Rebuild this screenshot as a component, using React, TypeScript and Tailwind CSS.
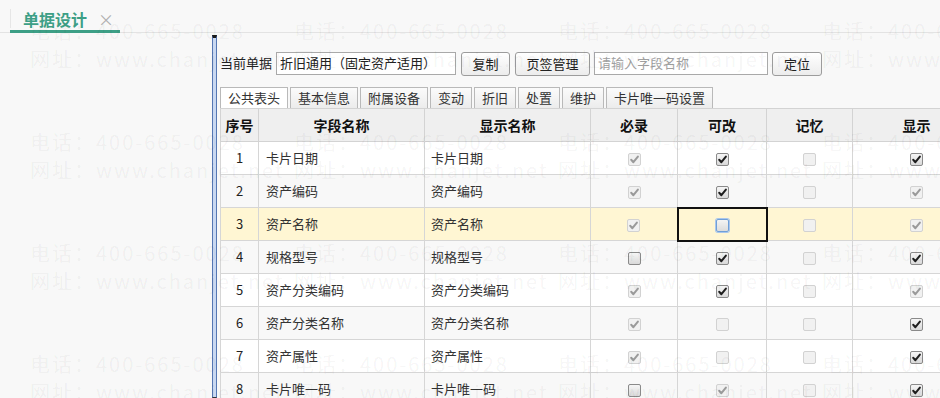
import React from 'react'

type Box = 'c' | 'u' | 'dc' | 'du' | 'uf'

const rows: { n: number; f: string; d: string; b: Box[] }[] = [
  { n: 1, f: '卡片日期', d: '卡片日期', b: ['dc', 'c', 'du', 'c'] },
  { n: 2, f: '资产编码', d: '资产编码', b: ['dc', 'c', 'du', 'dc'] },
  { n: 3, f: '资产名称', d: '资产名称', b: ['dc', 'uf', 'du', 'dc'] },
  { n: 4, f: '规格型号', d: '规格型号', b: ['u', 'c', 'du', 'c'] },
  { n: 5, f: '资产分类编码', d: '资产分类编码', b: ['dc', 'c', 'du', 'dc'] },
  { n: 6, f: '资产分类名称', d: '资产分类名称', b: ['dc', 'du', 'du', 'c'] },
  { n: 7, f: '资产属性', d: '资产属性', b: ['dc', 'du', 'du', 'c'] },
  { n: 8, f: '卡片唯一码', d: '卡片唯一码', b: ['u', 'dc', 'du', 'c'] },
]

const tabs = ['公共表头', '基本信息', '附属设备', '变动', '折旧', '处置', '维护', '卡片唯一码设置']

function Check({ kind }: { kind: Box }) {
  const disabled = kind === 'dc' || kind === 'du'
  const checked = kind === 'c' || kind === 'dc'
  let cls = 'border-[#8a8a8a] bg-gradient-to-b from-[#f6f6f6] to-[#d9d9d9]'
  if (disabled) cls = 'border-[#d2d2d2] bg-[#f1f1f1]'
  if (kind === 'uf') cls = 'border-[#6f9fd8] bg-gradient-to-b from-[#f4f4f4] to-[#dcdcdc] ring-1 ring-[#a9c6ec]'
  return (
    <span className={`inline-flex h-[13px] w-[13px] items-center justify-center rounded-[2px] border align-middle ${cls}`}>
      {checked && (
        <svg width="11" height="11" viewBox="0 0 11 11">
          <path
            d="M2.2 5.8 L4.4 8.2 L8.9 2.6"
            fill="none"
            stroke={disabled ? '#9a9a9a' : '#1e1e1e'}
            strokeWidth="2"
            strokeLinecap="round"
            strokeLinejoin="round"
          />
        </svg>
      )}
    </span>
  )
}

function Button({ children, w }: { children: React.ReactNode; w: string }) {
  return (
    <button
      className={`${w} h-[24px] rounded-[3px] border border-[#9c9c9c] bg-gradient-to-b from-white to-[#ececec] text-[13px] text-[#222]`}
    >
      {children}
    </button>
  )
}

export default function App() {
  return (
    <div className="relative h-[398px] w-[940px] overflow-hidden bg-[#f8f8f8] font-['Noto_Sans_CJK_SC',sans-serif] text-[#333]">
      <div className="flex h-[33px] items-end border-b border-[#e3e3e3] pl-[10px]">
        <div className="mb-[-1px] flex h-[24px] w-[110px] items-start border-b-[3px] border-[#3d9f86]">
          <div className="flex h-[19px] items-center border-l border-[#e6e6e6] pl-[12px]">
            <span className="text-[16px] font-bold leading-none text-[#3d9f86]">单据设计</span>
            <span className="ml-[11px] text-[16px] leading-none text-[#b0b0b0]">×</span>
          </div>
        </div>
      </div>

      <div className="flex h-[365px] pt-[2px]">
        <div className="w-[212px] shrink-0" />
        <div className="w-[5px] shrink-0 border-x border-b border-t-[3px] border-x-[#5577b3] border-t-[#1a1a1a] bg-[#c9d8f1]" />
        <div className="min-w-0 flex-1 overflow-hidden pl-[3px] pt-[16px]">
          <div className="flex h-[24px] items-center">
            <span className="text-[13px] text-[#222]">当前单据</span>
            <div className="ml-[4px] flex h-[23px] w-[180px] items-center border border-[#a9a9a9] bg-white px-[3px] text-[13px] text-[#222]">
              折旧通用（固定资产适用）
            </div>
            <div className="ml-[5px]">
              <Button w="w-[49px]">复制</Button>
            </div>
            <div className="ml-[5px]">
              <Button w="w-[75px]">页签管理</Button>
            </div>
            <div className="ml-[4px] flex h-[23px] w-[174px] items-center border border-[#a9a9a9] bg-white px-[3px] text-[13px] text-[#a0a0a0]">
              请输入字段名称
            </div>
            <div className="ml-[4px]">
              <Button w="w-[50px]">定位</Button>
            </div>
          </div>

          <div className="mt-[12px] flex h-[21px] gap-[2px]">
            {tabs.map((t, i) => (
              <div
                key={t}
                className={`flex items-center border border-b-0 border-[#b9b9b9] px-[7px] text-[13px] text-[#333] ${
                  i === 0 ? 'bg-white' : 'bg-gradient-to-b from-[#fbfbfb] to-[#ececec]'
                }`}
              >
                {t}
              </div>
            ))}
          </div>

          <table className="w-[760px] table-fixed border-collapse border-l border-[#cfcfcf] bg-white text-[13px]">
            <colgroup>
              <col className="w-[38px]" />
              <col className="w-[166px]" />
              <col className="w-[166px]" />
              <col className="w-[87px]" />
              <col className="w-[89px]" />
              <col className="w-[86px]" />
              <col className="w-[128px]" />
            </colgroup>
            <thead>
              <tr className="h-[33px] bg-[#efefef] text-[14px] font-bold text-[#111]">
                {['序号', '字段名称', '显示名称', '必录', '可改', '记忆', '显示'].map((h) => (
                  <th key={h} className="border border-[#d3d3d3] text-center font-bold">
                    {h}
                  </th>
                ))}
              </tr>
            </thead>
            <tbody>
              {rows.map((r) => (
                <tr
                  key={r.n}
                  className={`h-[33px] ${r.n === 3 ? 'bg-[#fff6d3]' : r.n % 2 === 0 ? 'bg-[#f8f8f8]' : 'bg-white'}`}
                >
                  <td className="border border-[#d6d6d6] text-center text-[#222]">{r.n}</td>
                  <td className="border border-[#d6d6d6] pl-[7px] text-[#333]">{r.f}</td>
                  <td className="border border-[#d6d6d6] pl-[6px] text-[#333]">{r.d}</td>
                  {r.b.map((b, i) => (
                    <td
                      key={i}
                      className={`text-center ${
                        b === 'uf' ? 'border-2 border-[#111]' : 'border border-[#d6d6d6]'
                      }`}
                    >
                      <Check kind={b} />
                    </td>
                  ))}
                </tr>
              ))}
            </tbody>
          </table>
        </div>
      </div>

      {/* watermark */}
      <div className="pointer-events-none absolute inset-0 grid auto-rows-[111px] grid-cols-[repeat(4,264px)] pl-[30px] pt-[17px] text-[20px] leading-[28px] tracking-[2px] text-black/[0.05]">
        {Array.from({ length: 16 }).map((_, i) => (
          <div key={i} className="flex flex-col whitespace-nowrap">
            <span>电话：400-665-0028</span>
            <span>网址：www.chanjet.net</span>
          </div>
        ))}
      </div>
    </div>
  )
}
